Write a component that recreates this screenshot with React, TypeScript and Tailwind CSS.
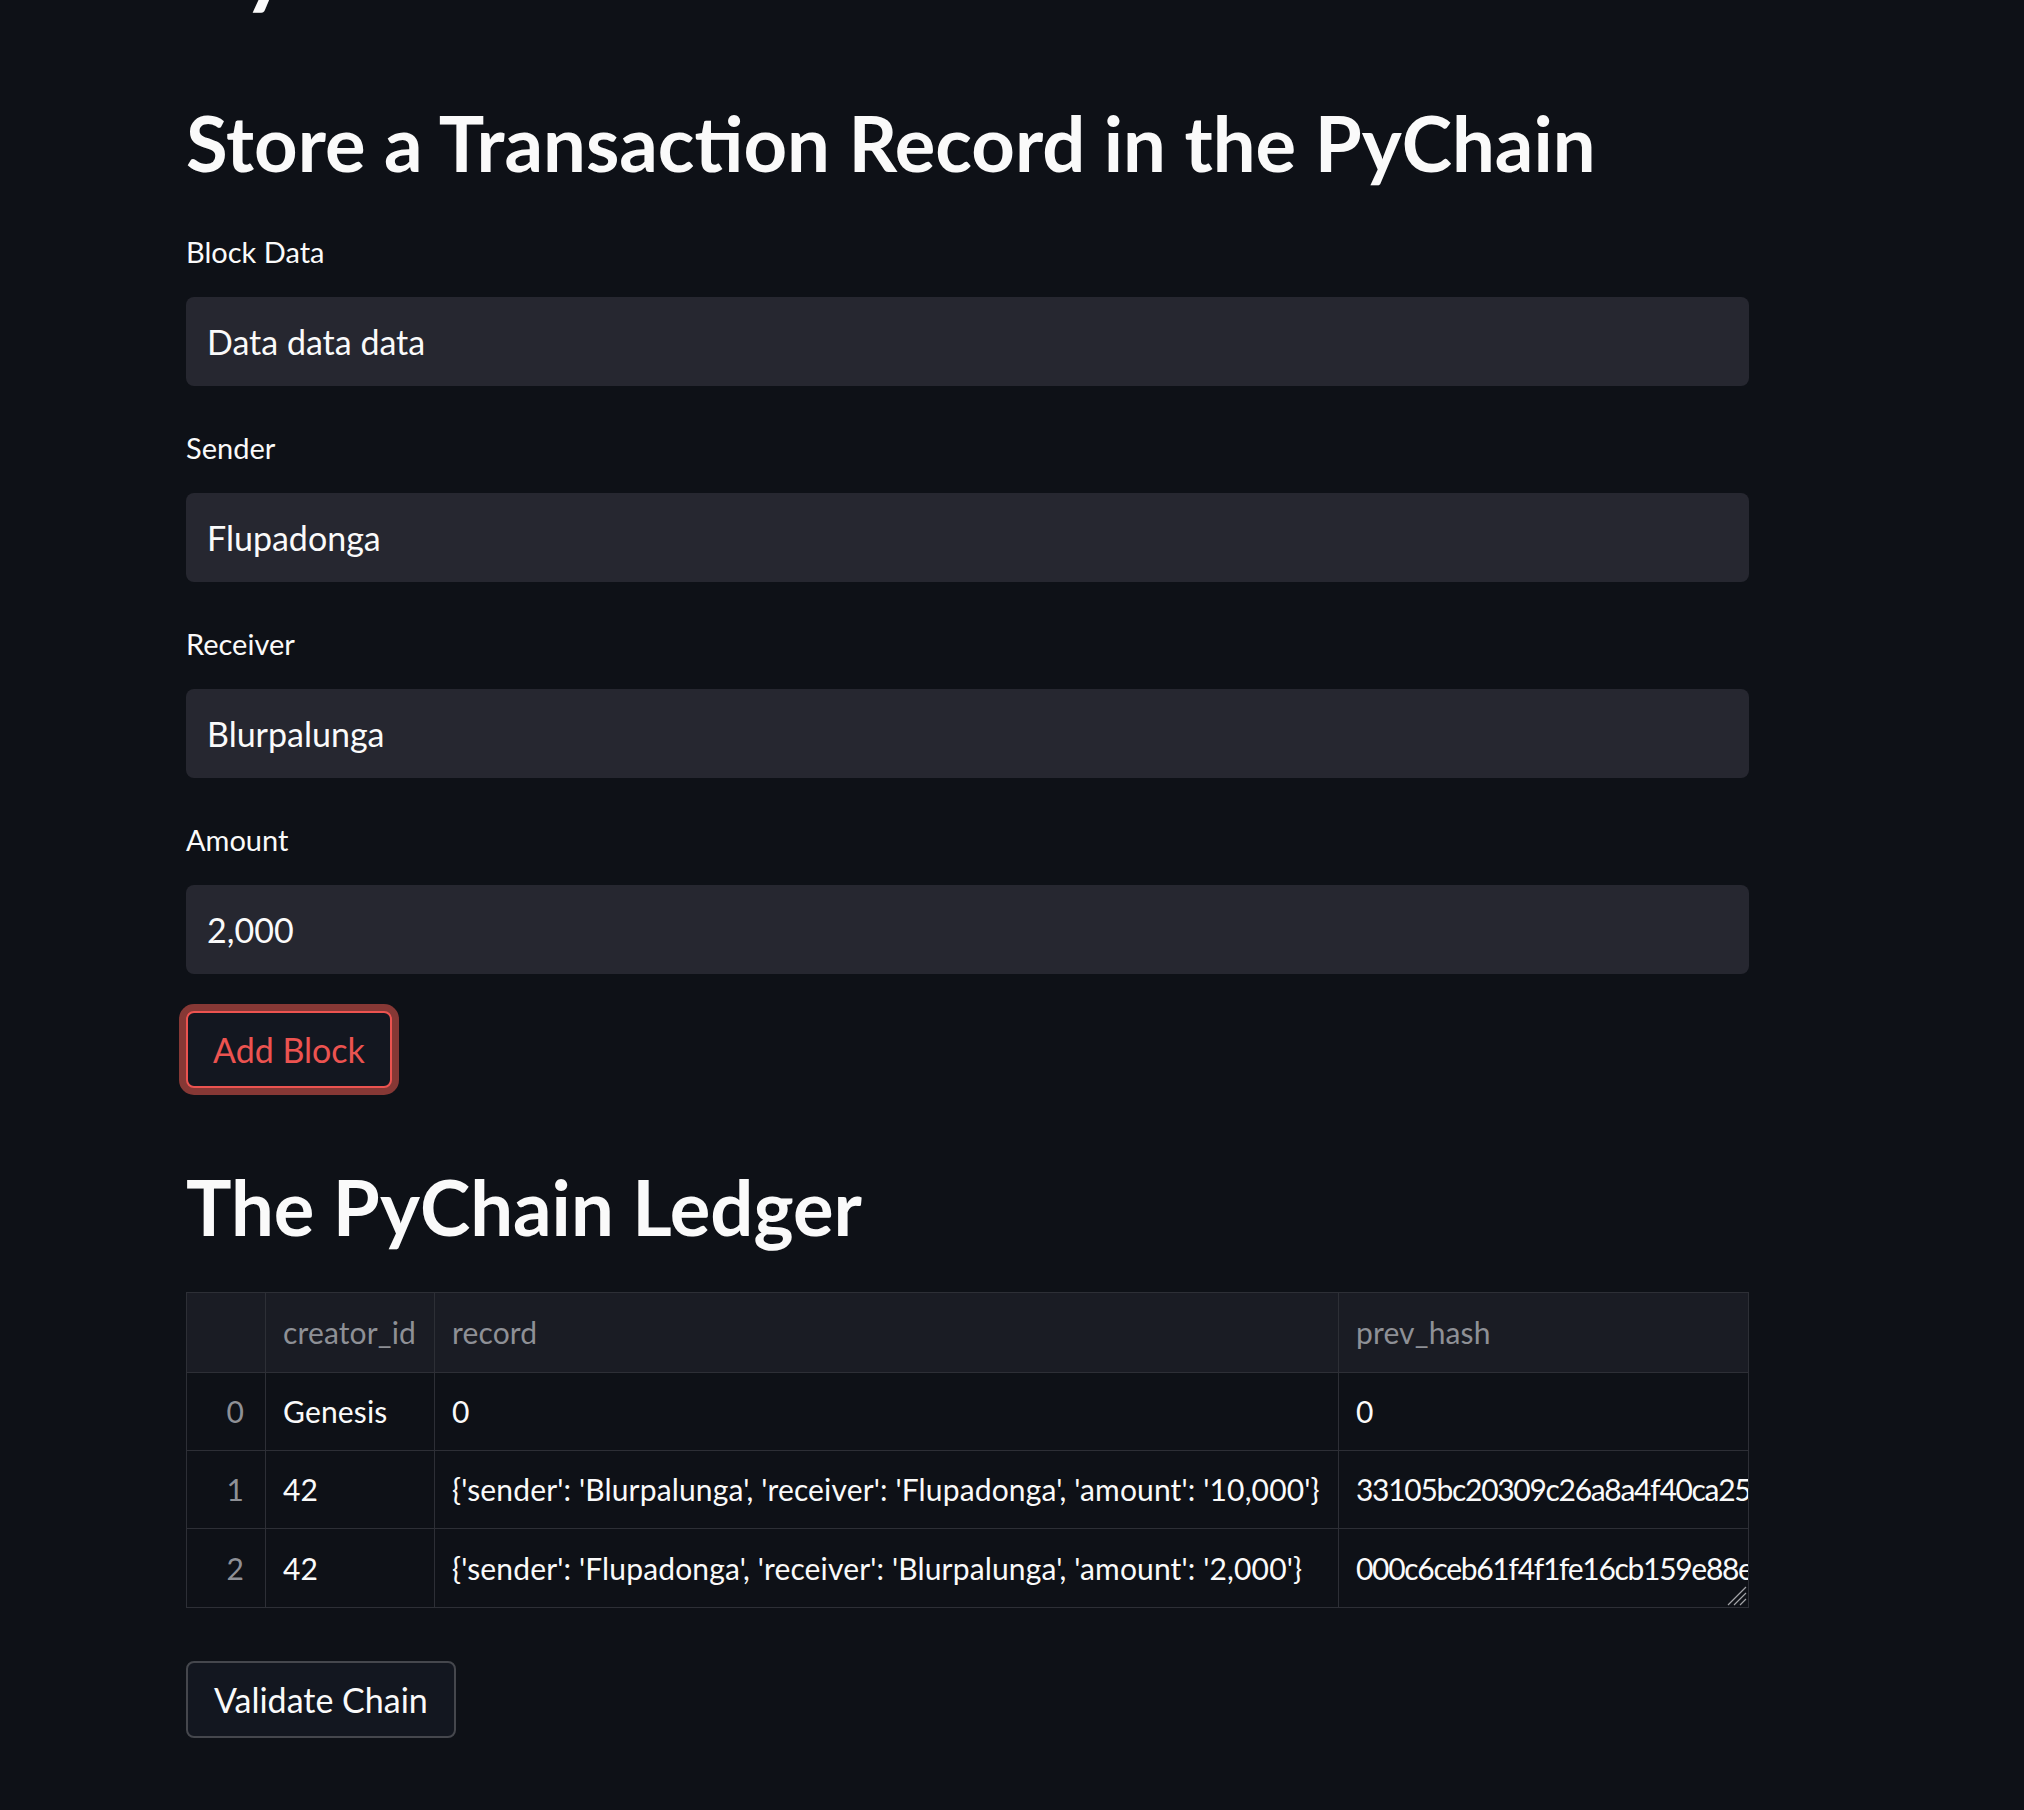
import React from "react";

const rows = [
  { i: "0", c: "Genesis", r: "0", h: "0" },
  {
    i: "1",
    c: "42",
    r: "{'sender': 'Blurpalunga', 'receiver': 'Flupadonga', 'amount': '10,000'}",
    h: "33105bc20309c26a8a4f40ca25",
  },
  {
    i: "2",
    c: "42",
    r: "{'sender': 'Flupadonga', 'receiver': 'Blurpalunga', 'amount': '2,000'}",
    h: "000c6ceb61f4f1fe16cb159e88e",
  },
];

function Field({ label, value }: { label: string; value: string }) {
  return (
    <div className="flex flex-col">
      <div className="h-[40px] text-[29px] leading-[40px] text-[#fafafa]">{label}</div>
      <div className="mt-[25px] flex h-[89px] items-center rounded-[8px] bg-[#262730] pl-[21px]">
        <span className="text-[34px] leading-[40px] text-[#fafafa]">{value}</span>
      </div>
    </div>
  );
}

export default function App() {
  return (
    <div className="relative min-h-[1810px] w-full overflow-hidden bg-[#0e1117] font-[Lato,'Noto_Sans',sans-serif] text-[#fafafa]">
      <div className="ml-[186px] flex w-[1563px] flex-col">
        <h1 className="-mt-[93px] h-[110px] text-[91px] font-bold leading-[110px]">PyChain</h1>
        <h2 className="mt-[81px] h-[90px] text-[76px] font-bold leading-[90px]">
          Store a Transaction Record in the PyChain
        </h2>
        <div className="mt-[44px] flex flex-col gap-[42px]">
          <Field label="Block Data" value="Data data data" />
          <Field label="Sender" value="Flupadonga" />
          <Field label="Receiver" value="Blurpalunga" />
          <Field label="Amount" value="2,000" />
        </div>
        <div className="mt-[37px] flex">
          <button className="flex h-[77px] items-center rounded-[8px] border-2 border-[#ec5350] bg-[#131720] px-[25px] text-[34px] leading-[40px] text-[#ec5350] shadow-[0_0_0_7px_#863835]">
            Add Block
          </button>
        </div>
        <h2 className="mt-[74px] h-[90px] text-[76px] font-bold leading-[90px]">The PyChain Ledger</h2>
        <div className="relative mt-[40px] flex flex-col border border-[#2d2f36] text-[30px] tracking-[0.15px]">
          <div className="flex h-[80px] border-b border-[#2d2f36] bg-[#1a1c24] text-[#8e9096]">
            <div className="w-[79px] shrink-0 border-r border-[#2d2f36]" />
            <div className="flex w-[169px] shrink-0 items-center border-r border-[#2d2f36] pl-[17px]">creator_id</div>
            <div className="flex w-[904px] shrink-0 items-center border-r border-[#2d2f36] pl-[17px]">record</div>
            <div className="flex flex-1 items-center pl-[17px]">prev_hash</div>
          </div>
          {rows.map((row, idx) => (
            <div
              key={row.i}
              className={idx < 2 ? "flex h-[78px] border-b border-[#2d2f36]" : "flex h-[78px]"}
            >
              <div className="flex w-[79px] shrink-0 items-center justify-end border-r border-[#2d2f36] pr-[21px] text-[#8e9096]">
                {row.i}
              </div>
              <div className="flex w-[169px] shrink-0 items-center border-r border-[#2d2f36] pl-[17px]">{row.c}</div>
              <div className="flex w-[904px] shrink-0 items-center overflow-hidden whitespace-nowrap border-r border-[#2d2f36] pl-[17px]">
                {row.r}
              </div>
              <div className="flex min-w-0 flex-1 items-center overflow-hidden whitespace-nowrap pl-[17px] tracking-[-1.3px]">
                {row.h}
              </div>
            </div>
          ))}
          <svg className="absolute bottom-[1px] right-[1px]" width="24" height="24" viewBox="0 0 24 24">
            <path
              d="M23 5 L5 23 M23 11 L11 23 M23 17 L17 23"
              stroke="#a3a4a8"
              strokeWidth="1.2"
            />
          </svg>
        </div>
        <div className="mt-[53px] flex">
          <button className="flex h-[77px] items-center rounded-[8px] border-2 border-[#45474d] bg-[#131720] px-[26px] text-[34px] leading-[40px] text-[#fafafa]">
            Validate Chain
          </button>
        </div>
      </div>
    </div>
  );
}
